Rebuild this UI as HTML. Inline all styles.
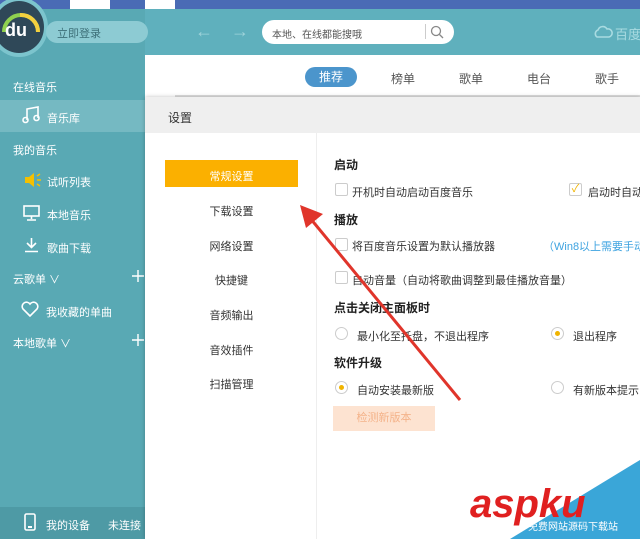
<!DOCTYPE html>
<html><head><meta charset="utf-8"><style>
*{margin:0;padding:0;box-sizing:border-box}
body{width:640px;height:539px;overflow:hidden;position:relative;background:#fff;font-family:"Liberation Sans","Noto Sans CJK SC",sans-serif;font-size:11px;color:#333}
.a{position:absolute;white-space:nowrap}
.side{position:absolute;left:0;top:0;width:145px;height:539px;background:#59a9b4}
.sw{color:#fff;font-size:11px}
.cb{position:absolute;width:13px;height:13px;border:1px solid #ccc;background:#fff;border-radius:2px}
.rd{position:absolute;width:13px;height:13px;border:1px solid #ccc;border-radius:50%;background:#fff}
.rd.on::after{content:"";position:absolute;left:3px;top:3px;width:5px;height:5px;border-radius:50%;background:#f0b400}
.h{font-weight:bold;font-size:12px;color:#222}
.nv{left:165px;width:133px;text-align:center;font-size:11px;color:#333}
</style></head><body>
<div class="a" style="left:0;top:0;width:640px;height:9px;background:#4a6bb5"></div>
<div class="a" style="left:70px;top:0;width:40px;height:9px;background:#fff"></div>
<div class="a" style="left:145px;top:0;width:30px;height:9px;background:#fff"></div>
<div class="a" style="left:0;top:9px;width:640px;height:46px;background:#5fb0bd"></div>
<div class="side" style="top:9px;height:530px"></div>
<!-- logo -->
<div class="a" style="left:-10px;top:-3px;width:58px;height:60px;border-radius:50%;background:#2f4858;border:4px solid #7cc4cd"></div>
<svg class="a" style="left:0;top:8px" width="44" height="40"><path d="M4 24 A17 17 0 0 1 38 24" fill="none" stroke="#8fd14f" stroke-width="4"/><path d="M20 7 A17 17 0 0 1 38 24" fill="none" stroke="#f4d03f" stroke-width="4"/></svg>
<div class="a" style="left:5px;top:20px;color:#fff;font-weight:bold;font-size:18px">du</div>
<div class="a" style="left:46px;top:21px;width:102px;height:22px;border-radius:11px;background:#8dcbd3"></div>
<div class="a" style="left:57px;top:25px;color:#3d6f78;font-size:11px">立即登录</div>
<div class="a" style="left:195px;top:21px;color:#9fd3da;font-size:18px">←</div>
<div class="a" style="left:231px;top:21px;color:#9fd3da;font-size:18px">→</div>
<div class="a" style="left:262px;top:20px;width:192px;height:24px;border-radius:12px;background:#fff"></div>
<div class="a" style="left:272px;top:26px;color:#555;font-size:10px">本地、在线都能搜哦</div>
<div class="a" style="left:425px;top:24px;width:1px;height:15px;background:#ccc"></div>
<svg class="a" style="left:430px;top:25px" width="14" height="14"><circle cx="6" cy="6" r="4.5" fill="none" stroke="#888" stroke-width="1.3"/><line x1="9.5" y1="9.5" x2="13" y2="13" stroke="#888" stroke-width="1.3"/></svg>
<svg class="a" style="left:593px;top:25px" width="20" height="14"><path d="M4 12 A4 4 0 0 1 5 5 A5 5 0 0 1 14 4 A4 4 0 0 1 16 12 Z" fill="none" stroke="#a9dbe1" stroke-width="1.6"/></svg>
<div class="a" style="left:615px;top:24px;color:#a9dbe1;font-size:13px">百度</div>
<!-- tabs -->
<div class="a" style="left:175px;top:55px;width:465px;height:42px;background:#fff;border-bottom:2px solid #ddd"></div>
<div class="a" style="left:305px;top:67px;width:52px;height:20px;border-radius:10px;background:#4b95cc;color:#fff;text-align:center;line-height:20px;font-size:12px">推荐</div>
<div class="a" style="left:391px;top:70px;font-size:12px;color:#555">榜单</div>
<div class="a" style="left:459px;top:70px;font-size:12px;color:#555">歌单</div>
<div class="a" style="left:527px;top:70px;font-size:12px;color:#555">电台</div>
<div class="a" style="left:595px;top:70px;font-size:12px;color:#555">歌手</div>
<!-- sidebar -->
<div class="a sw" style="left:13px;top:79px">在线音乐</div>
<div class="a" style="left:0;top:100px;width:145px;height:32px;background:#75b9c2"></div>
<svg class="a" style="left:22px;top:106px" width="18" height="18"><path d="M5 14 V3 L16 1 V12" fill="none" stroke="#fff" stroke-width="1.6"/><circle cx="3.5" cy="14" r="2.5" fill="none" stroke="#fff" stroke-width="1.6"/><circle cx="14.5" cy="12" r="2.5" fill="none" stroke="#fff" stroke-width="1.6"/></svg>
<div class="a sw" style="left:47px;top:110px">音乐库</div>
<div class="a sw" style="left:13px;top:142px">我的音乐</div>
<svg class="a" style="left:24px;top:172px" width="18" height="16"><path d="M1 5 H5 L10 1 V15 L5 11 H1 Z" fill="#f5c000"/><path d="M13 4 L16 2 M13 8 H17 M13 12 L16 14" stroke="#f5c000" stroke-width="1.5"/></svg>
<div class="a sw" style="left:47px;top:174px">试听列表</div>
<svg class="a" style="left:23px;top:205px" width="18" height="16"><rect x="1" y="1" width="15" height="10" fill="none" stroke="#fff" stroke-width="1.6"/><path d="M8.5 11 V14 M4 15 H13" stroke="#fff" stroke-width="1.6"/></svg>
<div class="a sw" style="left:47px;top:207px">本地音乐</div>
<svg class="a" style="left:23px;top:237px" width="18" height="16"><path d="M8.5 1 V10 M4 6 L8.5 10.5 L13 6 M2 14.5 H15" fill="none" stroke="#fff" stroke-width="1.6"/></svg>
<div class="a sw" style="left:47px;top:240px">歌曲下载</div>
<div class="a sw" style="left:13px;top:271px">云歌单 ∨</div>
<svg class="a" style="left:132px;top:270px" width="12" height="12"><path d="M6 0 V12 M0 6 H12" stroke="#fff" stroke-width="1.4"/></svg>
<svg class="a" style="left:21px;top:301px" width="18" height="16"><path d="M9 15 L2 8 A4 4 0 0 1 9 3 A4 4 0 0 1 16 8 Z" fill="none" stroke="#fff" stroke-width="1.6"/></svg>
<div class="a sw" style="left:46px;top:304px">我收藏的单曲</div>
<div class="a sw" style="left:13px;top:335px">本地歌单 ∨</div>
<svg class="a" style="left:132px;top:334px" width="12" height="12"><path d="M6 0 V12 M0 6 H12" stroke="#fff" stroke-width="1.4"/></svg>
<div class="a" style="left:0;top:507px;width:145px;height:32px;background:#4e9aa5"></div>
<svg class="a" style="left:24px;top:513px" width="12" height="18"><rect x="1" y="1" width="10" height="16" rx="1.5" fill="none" stroke="#fff" stroke-width="1.6"/><rect x="4" y="13" width="4" height="2" fill="#fff"/></svg>
<div class="a sw" style="left:46px;top:517px">我的设备</div>
<div class="a sw" style="left:108px;top:517px">未连接</div>
<!-- dialog -->
<div class="a" style="left:145px;top:97px;width:495px;height:442px;background:#fff;box-shadow:0 0 4px rgba(0,0,0,.25)"></div>
<div class="a" style="left:145px;top:97px;width:495px;height:36px;background:#efefef"></div>
<div class="a" style="left:168px;top:109px;font-size:12px;color:#333">设置</div>
<div class="a" style="left:316px;top:133px;width:1px;height:406px;background:#eee"></div>
<div class="a" style="left:165px;top:160px;width:133px;height:27px;background:#fbb000"></div>
<div class="a nv" style="top:168px;color:#fff">常规设置</div>
<div class="a nv" style="top:203px">下载设置</div>
<div class="a nv" style="top:238px">网络设置</div>
<div class="a nv" style="top:272px">快捷键</div>
<div class="a nv" style="top:307px">音频输出</div>
<div class="a nv" style="top:342px">音效插件</div>
<div class="a nv" style="top:376px">扫描管理</div>
<div class="a h" style="left:334px;top:156px">启动</div>
<div class="cb" style="left:335px;top:183px"></div>
<div class="a" style="left:352px;top:184px">开机时自动启动百度音乐</div>
<div class="cb" style="left:569px;top:183px;color:#f0b400;font-size:11px;line-height:11px;text-align:center">✓</div>
<div class="a" style="left:588px;top:184px">启动时自动</div>
<div class="a h" style="left:334px;top:211px">播放</div>
<div class="cb" style="left:335px;top:238px"></div>
<div class="a" style="left:352px;top:238px">将百度音乐设置为默认播放器</div>
<div class="a" style="left:543px;top:238px;color:#3ea3e0">（Win8以上需要手动</div>
<div class="cb" style="left:335px;top:271px"></div>
<div class="a" style="left:352px;top:272px">自动音量（自动将歌曲调整到最佳播放音量）</div>
<div class="a h" style="left:334px;top:299px">点击关闭主面板时</div>
<div class="rd" style="left:335px;top:327px"></div>
<div class="a" style="left:357px;top:328px">最小化至托盘，不退出程序</div>
<div class="rd on" style="left:551px;top:327px"></div>
<div class="a" style="left:573px;top:328px">退出程序</div>
<div class="a h" style="left:334px;top:354px">软件升级</div>
<div class="rd on" style="left:335px;top:381px"></div>
<div class="a" style="left:357px;top:382px">自动安装最新版</div>
<div class="rd" style="left:551px;top:381px"></div>
<div class="a" style="left:573px;top:382px">有新版本提示</div>
<div class="a" style="left:333px;top:406px;width:102px;height:25px;background:#fde3d1;color:#f4b38a;text-align:center;line-height:25px;font-size:11px">检测新版本</div>
<!-- arrow -->
<svg class="a" style="left:0;top:0" width="640" height="539"><line x1="460" y1="400" x2="310" y2="218" stroke="#e0352b" stroke-width="3"/><polygon points="300,205 323,214 306,228" fill="#e0352b"/></svg>
<!-- watermark -->
<svg class="a" style="left:510px;top:460px" width="130" height="79"><polygon points="130,0 130,79 0,79" fill="#3aa6d8"/></svg>
<div class="a" style="left:470px;top:482px;color:#e02020;font-weight:bold;font-style:italic;font-size:40px;font-family:'Liberation Sans',sans-serif">aspku</div>
<div class="a" style="left:528px;top:518px;color:#fff;font-size:10px">免费网站源码下载站</div>
</body></html>
